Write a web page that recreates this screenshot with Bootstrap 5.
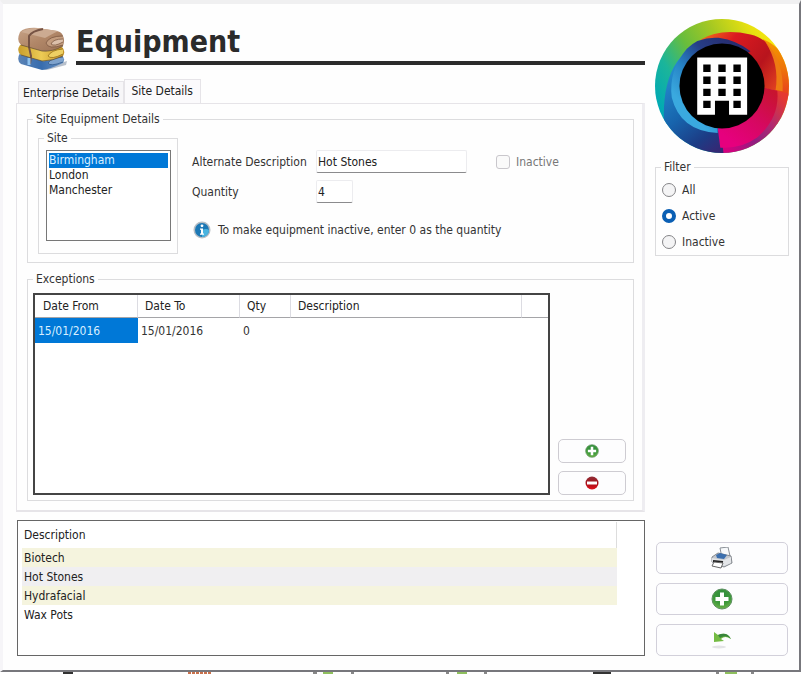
<!DOCTYPE html>
<html lang="en">
<head>
<meta charset="utf-8">
<meta name="viewport" content="width=device-width, initial-scale=1">
<title>Equipment</title>
<link href="https://cdn.jsdelivr.net/npm/bootstrap@5.3.0/dist/css/bootstrap.min.css" rel="stylesheet">
<style>
  body { font: 12px/16px "DejaVu Sans Condensed", "DejaVu Sans", sans-serif; color: #333; background: #fff; }
  .win { border-left: 3px solid #f6f5f8; border-top: 4px solid #f0f0f1; border-right: 2px solid #77777c; border-bottom: 2px solid #77777c; background: #fefefe; padding: 15px 10px 14px 13px; gap: 10px; }
  .side { width: 134px; }
  .head { gap: 9px; padding: 4px 0 6px 1px; }
  .head h1 { font-size: 30px; line-height: 38px; font-weight: 700; color: #2b2b2b; border-bottom: 4px solid #2b2b2b; }
  .tabs { padding-left: 2px; gap: 0; border: 0; }
  .tabs button { background: #f7f6f8; border: 1px solid #e6e4e8; border-bottom: 0; color: #222; padding: 3px 4px 2px; margin-top: 2px; }
  .tabs button.active { background: #fbfafc; padding: 3px 7px 4px 6px; margin-top: 0; }
  .pane { border: 1px solid #e6e4e8; border-right: 3px solid #eeedf1; border-bottom-width: 2px; padding: 7px 8px 9px 10px; }
  fieldset { border: 1px solid #dcdcde; }
  legend { float: none; width: auto; font-size: 12px; line-height: 16px; margin: 0; padding: 0 3px; }
  .site-box { padding: 4px 7px 11px 7px; width: 140px; }
  .site-box > legend { margin-left: -2px; }
  .site-box select { width: 125px; height: 91px; border: 1px solid #777; border-radius: 0; background: #fff; color: #222; padding: 2px; outline: 0; overflow: hidden; }
  .site-box option { padding: 0; min-height: 0; line-height: 14px; height: 15px; }
  .site-box option:checked { background: linear-gradient(#0078d7, #0078d7); -webkit-text-fill-color: #d8efff; }
  .details { padding: 3px 10px 8px; gap: 14px; }
  .details > legend { margin-left: -5px; }
  .fields { padding-top: 20px; }
  .field-row { height: 23px; margin-bottom: 7px; }
  .field-row .name { width: 124px; }
  .entry { height: 23px; border: 1px solid #ececef; border-bottom: 1px solid #8b8b8d; border-radius: 2px; padding: 0 1px; color: #222; background: #fff; }
  .w-desc { width: 151px; } .w-qty { width: 37px; }
  .check { width: 14px; height: 14px; margin: 0 6px 0 29px; border: 1px solid #c9c7cc; border-radius: 3px; appearance: none; background: #fafafa; }
  .dim { color: #777; }
  .hint { padding: 11px 0 0 1px; gap: 7px; }
  .exc { padding: 6px 7px 5px 5px; gap: 8px; }
  .grid-box { border: 2px solid #444; background: #fff; }
  .grid-box table, .list-box table { width: 100%; table-layout: fixed; border-collapse: separate; border-spacing: 0; }
  .grid-box th { font-weight: 400; height: 23px; padding: 0 8px; border-right: 1px solid #dcdce2; border-bottom: 1px solid #a5a5a8; color: #222; }
  .grid-box th:nth-child(n+2) { padding-left: 7px; }
  .grid-box th:last-child { border-right: 0; }
  .grid-box td { height: 25px; padding: 0 3px; }
  .grid-box td.sel { background: #0078d7; color: #d8efff; }
  .tool { background: #fdfdfe; border: 1px solid #ceccd2; border-radius: 5px; padding: 0; color: #222; }
  .tool svg { display: block; margin: auto; }
  .small-tool { width: 68px; height: 24px; }
  .big-tool { height: 32px; border-color: #d2d0da; }
  .side-tools { gap: 9px; padding: 0 1px; }
  .list-box { border: 1px solid #666; min-height: 136px; margin: 8px 0 0 1px; padding: 1px 27px 0 4px; background: #fff; }
  .list-box th { font-weight: 400; height: 26px; border-right: 1px solid #ddd; }
  .list-box th, .list-box td { padding: 0 2px; color: #222; }
  .list-box td { height: 19px; }
  .cream td { background: #f5f4de; } .grey td { background: #f0eff1; }
  .disc { width: 134px; height: 134px; }
  .filter { padding: 2px 6px 0; margin-top: 6px; }
  .filter > legend { margin-left: -1px; }
  .filter label { height: 26px; gap: 6px; }
  .filter input { appearance: none; width: 14px; height: 14px; margin: 0; border: 1px solid #858588; border-radius: 50%; background: #f4f4f5; }
  .filter input:checked { border: 4px solid #0a5fb4; background: #fff; }
  .under { height: 2px; overflow: hidden; padding-left: 61px; }
  .under svg { display: block; }
</style>
<script src="https://cdn.jsdelivr.net/npm/bootstrap@5.3.0/dist/js/bootstrap.bundle.min.js"></script>
</head>
<body class="d-flex flex-column min-vh-100">
<svg width="0" height="0" class="position-absolute" aria-hidden="true">
  <defs>
    <radialGradient id="gGreen" cx=".5" cy=".3" r=".75"><stop offset="0" stop-color="#2f8a3c"/><stop offset=".6" stop-color="#3f9a3c"/><stop offset="1" stop-color="#78b84a"/></radialGradient>
    <linearGradient id="gRed" x2="0" y2="1"><stop offset="0" stop-color="#8f3038"/><stop offset=".5" stop-color="#a5101a"/><stop offset="1" stop-color="#e0101a"/></linearGradient>
    <symbol id="plus" viewBox="0 0 22 22"><circle cx="11" cy="11" r="10" fill="url(#gGreen)" stroke="#5d8f62"/><path d="M9 4.500h4v4.500h4.500v4H13v4.500H9V13H4.500V9H9z" fill="#fff"/></symbol>
  </defs>
</svg>
<main class="win d-flex flex-grow-1">
  <div class="d-flex flex-column flex-grow-1">
    <header class="head d-flex">
      <svg class="mt-1" width="50" height="46" viewBox="0 0 50 46" aria-hidden="true">
        <defs>
          <linearGradient id="tan" x2="1" y2="1"><stop offset="0" stop-color="#c6a287"/><stop offset=".5" stop-color="#b18768"/><stop offset="1" stop-color="#9b7257"/></linearGradient>
          <linearGradient id="gold" x2="1" y2="0"><stop offset="0" stop-color="#c89e2d"/><stop offset=".5" stop-color="#edcb55"/><stop offset="1" stop-color="#c49227"/></linearGradient>
          <linearGradient id="denim" x2="1" y2="0"><stop offset="0" stop-color="#5b83b5"/><stop offset=".5" stop-color="#376cae"/><stop offset="1" stop-color="#6d94c3"/></linearGradient>
        </defs>
        <path d="M24 42 50 34 49 38 30 43z" fill="#9aa5b5" opacity=".7"/>
        <path d="M3 26Q-1 33 4 37L25 43Q31 43 46 36Q49 31 44 28L20 22z" fill="url(#denim)"/>
        <path d="M46 30Q34 31 31 36Q33 40 46 35" fill="#7ea2cc" stroke="#2f5687" stroke-width=".7"/>
        <path d="M3 18Q-1 24 4 28L25 34Q31 35 46 29Q49 24 45 20L20 15z" fill="url(#gold)"/>
        <path d="M46 22Q34 23 31 29Q34 33 46 27" fill="#eed063" stroke="#8c6714" stroke-width=".7"/>
        <path d="M3 5Q-1 14 4 18L25 24Q36 25 46 19Q48 13 46 9Q45 5 40 4L21 1Q8 0 3 5z" fill="url(#tan)"/>
        <path d="M4 5Q10 1 21 1L41 4 28 11Z" fill="#ccab92"/>
        <path d="M46 9Q32 9 29 16Q31 23 46 18" fill="#c39c7e" stroke="#74503b" stroke-width=".7"/>
        <path d="M46 12Q36 12 34 17Q37 20 46 15" fill="#dcc0aa" stroke="#74503b" stroke-width=".7"/>
        <path d="M26 2Q15 4 12 9L12 20 14 29 13 37" fill="none" stroke="#765344" stroke-width="2"/>
        <path d="M12 31v7" stroke="#8dc0ed" stroke-width="3"/>
        <path d="M4 18 25 24Q36 25 46 19M4 28 25 34Q36 34 46 29" fill="none" stroke="#5e4c32" stroke-width=".7"/>
      </svg>
      <h1 class="mb-0 flex-grow-1 align-self-start">Equipment</h1>
    </header>
    <div class="tabs d-flex" role="tablist">
      <button type="button" role="tab" aria-selected="false">Enterprise Details</button>
      <button type="button" role="tab" aria-selected="true" class="active">Site Details</button>
    </div>
    <section class="pane d-flex flex-column flex-grow-1" role="tabpanel">
      <fieldset class="details d-flex">
        <legend>Site Equipment Details</legend>
        <fieldset class="site-box">
          <legend>Site</legend>
          <select size="6" aria-label="Site">
            <option selected>Birmingham</option><option>London</option><option>Manchester</option>
          </select>
        </fieldset>
        <div class="fields">
          <div class="field-row d-flex align-items-center">
            <label class="name" for="alt">Alternate Description</label>
            <input id="alt" class="entry w-desc" type="text" value="Hot Stones">
            <input id="off" class="check" type="checkbox" disabled>
            <label class="dim" for="off">Inactive</label>
          </div>
          <div class="field-row d-flex align-items-center">
            <label class="name" for="qty">Quantity</label>
            <input id="qty" class="entry w-qty" type="text" value="4">
          </div>
          <div class="hint d-flex align-items-center">
            <svg width="18" height="18" viewBox="0 0 18 18" aria-hidden="true"><circle cx="9" cy="9" r="8.500" fill="#b6bec5"/><circle cx="9" cy="9" r="7" fill="#1c78b5"/><path d="M9 16a7 7 0 0 0 7-7Q13 7 9 9z" fill="#49b4e0"/><circle cx="9" cy="4.800" r="1.400" fill="#fff"/><path d="M7 7.500h3v5h1v1.300H7v-1.300h1V8.800H7z" fill="#fff"/></svg>
            <span>To make equipment inactive, enter 0 as the quantity</span>
          </div>
        </div>
      </fieldset>
      <fieldset class="exc d-flex flex-grow-1 mt-2">
        <legend>Exceptions</legend>
        <div class="grid-box flex-grow-1">
          <table>
            <colgroup><col style="width:103px"><col style="width:102px"><col style="width:51px"><col><col style="width:26px"></colgroup>
            <thead><tr><th>Date From</th><th>Date To</th><th>Qty</th><th>Description</th><th></th></tr></thead>
            <tbody><tr><td class="sel">15/01/2016</td><td>15/01/2016</td><td>0</td><td></td><td></td></tr></tbody>
          </table>
        </div>
        <div class="d-flex flex-column justify-content-end gap-2">
          <button type="button" class="tool small-tool" aria-label="Add exception"><svg width="14" height="14"><use href="#plus"/></svg></button>
          <button type="button" class="tool small-tool" aria-label="Remove exception"><svg width="14" height="14" viewBox="0 0 14 14"><circle cx="7" cy="7" r="6.500" fill="url(#gRed)"/><path d="M2 5.500h10v3H2z" fill="#fff"/></svg></button>
        </div>
      </fieldset>
    </section>
    <section class="list-box">
      <table>
        <thead><tr><th>Description</th></tr></thead>
        <tbody>
          <tr class="cream"><td>Biotech</td></tr>
          <tr class="grey"><td>Hot Stones</td></tr>
          <tr class="cream"><td>Hydrafacial</td></tr>
          <tr><td>Wax Pots</td></tr>
        </tbody>
      </table>
    </section>
  </div>
  <aside class="side d-flex flex-column flex-shrink-0">
    <svg class="disc" viewBox="45 56 400 400" aria-hidden="true">
      <defs>
        <linearGradient id="o1" gradientUnits="userSpaceOnUse" x1="60" y1="330" x2="420" y2="120"><stop offset="0" stop-color="#00a9b5"/><stop offset=".2" stop-color="#1bb59a"/><stop offset=".4" stop-color="#68bd3c"/><stop offset=".62" stop-color="#a5c822"/><stop offset=".85" stop-color="#e6e010"/><stop offset="1" stop-color="#fdea10"/></linearGradient>
        <linearGradient id="o2" x2="0" y2="1"><stop offset="0" stop-color="#f59a00"/><stop offset=".5" stop-color="#ee7509"/><stop offset="1" stop-color="#e73a20"/></linearGradient>
        <linearGradient id="o3" gradientUnits="userSpaceOnUse" x1="430" y1="290" x2="250" y2="430"><stop offset="0" stop-color="#e53a30"/><stop offset=".35" stop-color="#b02a70"/><stop offset=".65" stop-color="#8e1f80"/><stop offset="1" stop-color="#d5007e"/></linearGradient>
        <linearGradient id="o4" gradientUnits="userSpaceOnUse" x1="80" y1="230" x2="240" y2="440"><stop offset="0" stop-color="#2389cc"/><stop offset=".45" stop-color="#1764ad"/><stop offset=".8" stop-color="#1c3c85"/><stop offset="1" stop-color="#342975"/></linearGradient>
        <linearGradient id="o5" gradientUnits="userSpaceOnUse" x1="190" y1="100" x2="410" y2="260"><stop offset="0" stop-color="#f06a1a"/><stop offset=".3" stop-color="#db1a20"/><stop offset=".7" stop-color="#b8141d"/><stop offset="1" stop-color="#e04020"/></linearGradient>
        <linearGradient id="o6" gradientUnits="userSpaceOnUse" x1="390" y1="270" x2="270" y2="420"><stop offset="0" stop-color="#c81430"/><stop offset=".5" stop-color="#d60860"/><stop offset="1" stop-color="#e6007e"/></linearGradient>
        <linearGradient id="o7" gradientUnits="userSpaceOnUse" x1="300" y1="120" x2="110" y2="290"><stop offset="0" stop-color="#27296b"/><stop offset=".4" stop-color="#263d86"/><stop offset=".7" stop-color="#2581c4"/><stop offset="1" stop-color="#3aa9df"/></linearGradient>
        <clipPath id="rim"><circle cx="245" cy="256" r="200"/></clipPath>
      </defs>
      <g clip-path="url(#rim)">
        <path d="M45 56h400v400H45z" fill="url(#o1)"/>
        <path d="M365 115Q400 130 425 158L460 190V290L400 275Q420 190 365 115z" fill="url(#o2)"/>
        <path d="M365 260 450 280V460H240L232 380z" fill="url(#o3)"/>
        <path d="M72 370Q66 250 110 185Q160 115 250 112L130 250 240 380 250 460H130z" fill="url(#o4)"/>
        <path d="M180 118Q240 82 330 102Q357 108 375 125Q425 185 408 270L370 262 260 130z" fill="url(#o5)"/>
        <path d="M374 124Q430 180 426 272L405 268Q417 190 374 124z" fill="#ee7b12"/>
        <path d="M365 260 410 270Q418 350 350 410Q300 445 240 440L232 380z" fill="url(#o6)"/>
        <path d="M140 145Q175 108 235 112Q290 120 330 152L300 170 130 250 150 330 232 380V396Q120 390 95 290Q85 210 140 145z" fill="url(#o7)"/>
      </g>
      <circle cx="245" cy="256" r="127" fill="#000"/>
      <path fill="#fff" fill-rule="evenodd" d="M171 171h149v171h-54v-42h-42v42h-53zM189 192v22h22v-22zM234 192v22h22v-22zM279 192v22h22v-22zM189 228v22h22v-22zM234 228v22h22v-22zM279 228v22h22v-22zM189 264v22h22v-22zM234 264v22h22v-22zM279 264v22h22v-22zM189 300v22h22v-22zM279 300v22h22v-22z"/>
    </svg>
    <fieldset class="filter">
      <legend>Filter</legend>
      <label class="d-flex align-items-center"><input type="radio" name="f">All</label>
      <label class="d-flex align-items-center"><input type="radio" name="f" checked>Active</label>
      <label class="d-flex align-items-center"><input type="radio" name="f">Inactive</label>
    </fieldset>
    <div class="side-tools d-grid mt-auto">
      <button type="button" class="tool big-tool" aria-label="Print"><svg width="22" height="22" viewBox="0 0 22 22"><path d="M9 1 17 0 19 9 11 11z" fill="#f7f9fb" stroke="#8b9097"/><path d="M1 10 7 6 20 9 21 16 13 20 1 15z" fill="#c4c8ce" stroke="#85898f"/><path d="M5 8 9 6 16 8 13 12 6 11z" fill="#3c6fae"/><path d="M1 11 13 13 20 10V16L13 19 1 15z" fill="#e3e5e8"/><path d="M2 14 12 15" stroke="#222" stroke-width="2"/><path d="M3 15 12 16 10 21 1 19z" fill="#fff" stroke="#666"/></svg></button>
      <button type="button" class="tool big-tool" aria-label="Add"><svg width="22" height="22"><use href="#plus"/></svg></button>
      <button type="button" class="tool big-tool" aria-label="Undo"><svg width="22" height="22" viewBox="0 0 22 22"><ellipse cx="8" cy="18" rx="7" ry="1.500" fill="#e3e3e6"/><path d="M3 3 3 13 13 12 10 10Q14 6 20 10Q16 2 7 6z" fill="#74bb43"/><path d="M7 6Q16 2 20 10Q15 5 9 9z" fill="#38853c"/></svg></button>
    </div>
  </aside>
</main>
<div class="under"><svg width="700" height="2" aria-hidden="true"><path d="M2 1h10M532 1h18" stroke="#333" stroke-width="2"/><path d="M127 1h24" stroke="#c9714c" stroke-width="2" stroke-dasharray="3 1"/><path d="M262 1h10M396 1h10M664 1h12" stroke="#8fc05e" stroke-width="2"/><path d="M252 1h4M290 1h3M385 1h3M423 1h3M655 1h3M690 1h3" stroke="#888" stroke-width="2"/></svg></div>
</body>
</html>
